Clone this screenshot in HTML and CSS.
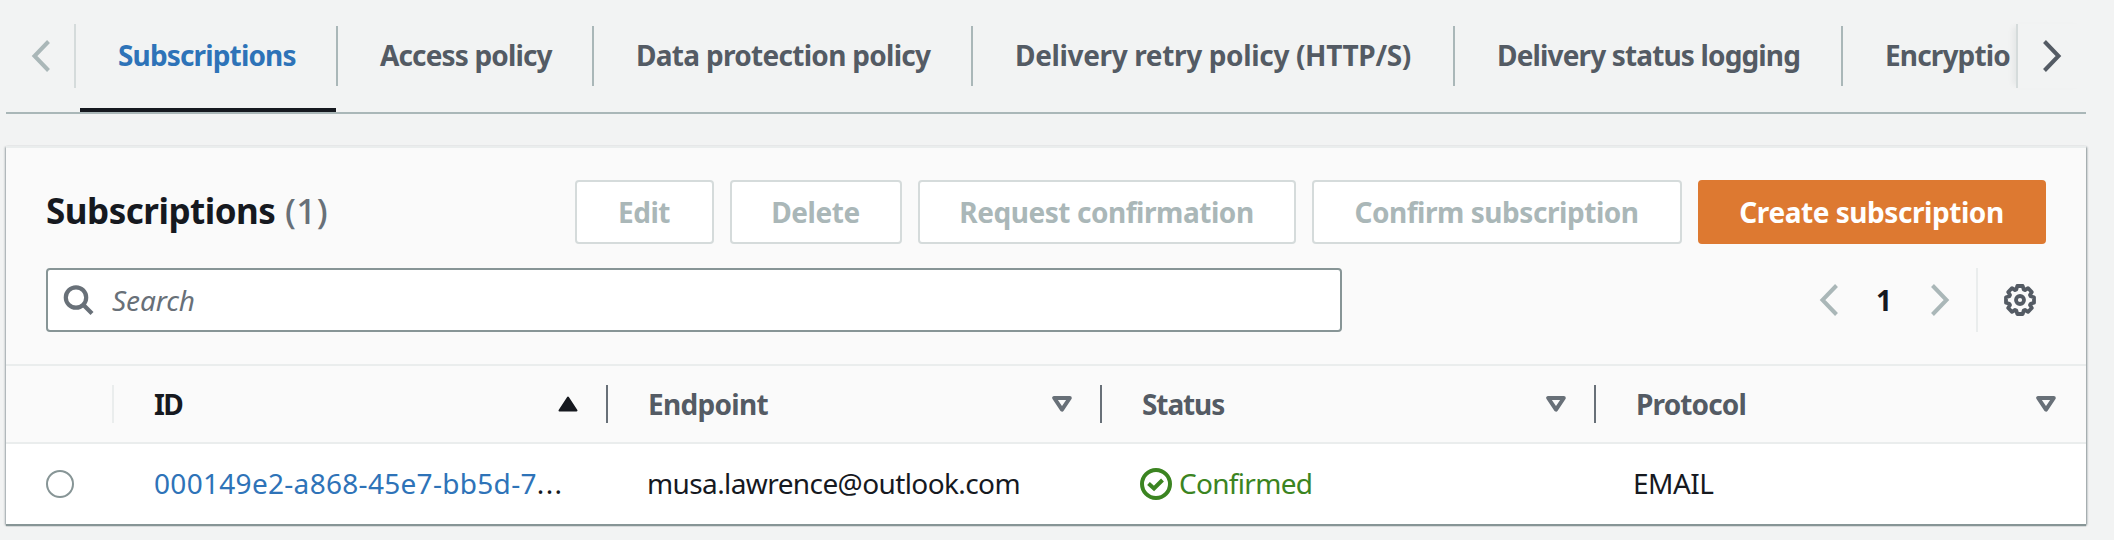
FILE: index.html
```html
<!DOCTYPE html>
<html lang="en">
<head>
<meta charset="utf-8">
<title>Subscriptions</title>
<link rel="stylesheet" href="styles.css">
</head>
<body>
<nav class="tabs">
  <button class="scroll scroll-left" aria-label="Scroll left"><svg width="20" height="32" viewBox="0 0 20 32"><path d="M17.500 1.500 3.500 16l14 14.500"/></svg></button>
  <div class="tab-list">
    <a class="tab active"><span class="t1">Subscriptions</span></a>
    <a class="tab"><span class="t2">Access policy</span></a>
    <a class="tab"><span class="t3">Data protection policy</span></a>
    <a class="tab"><span class="t4">Delivery retry policy (HTTP/S)</span></a>
    <a class="tab"><span class="t5">Delivery status logging</span></a>
    <a class="tab"><span class="t6">Encryptio</span></a>
  </div>
  <button class="scroll scroll-right" aria-label="Scroll right"><svg width="20" height="32" viewBox="0 0 20 32"><path d="M2.500 1.500l14 14.500-14 14.500"/></svg></button>
</nav>
<main class="card">
  <header class="head">
    <h1 class="title"><span class="title-name">Subscriptions</span> <span class="count">(1)</span></h1>
    <div class="actions">
      <button class="btn edit"><span>Edit</span></button>
      <button class="btn delete"><span>Delete</span></button>
      <button class="btn request"><span>Request confirmation</span></button>
      <button class="btn confirm"><span>Confirm subscription</span></button>
      <button class="btn primary"><span>Create subscription</span></button>
    </div>
  </header>
  <div class="tools">
    <label class="search">
      <svg width="32" height="32" viewBox="0 0 32 32"><circle cx="13" cy="13.500" r="10.200"/><path d="M20 20.500 29 29.500"/></svg>
      <span class="placeholder">Search</span>
    </label>
    <div class="pager">
      <svg class="chev" width="20" height="32" viewBox="0 0 20 32"><path d="M17.500 1.500 3.500 16l14 14.500"/></svg>
      <span class="page">1</span>
      <svg class="chev" width="20" height="32" viewBox="0 0 20 32"><path d="M2.500 1.500l14 14.500-14 14.500"/></svg>
      <span class="rule"></span>
      <svg class="gear" width="34" height="34" viewBox="-17 -17 34 34"><path d="M-2.700-14H2.700L3.700-10.600 5-10 8-11.800 11.800-8 10-5 10.600-3.700 14-2.700V2.700L10.600 3.700 10 5 11.800 8 8 11.800 5 10 3.700 10.600 2.700 14H-2.700L-3.700 10.600-5 10-8 11.800-11.800 8-10 5-10.600 3.700-14 2.700V-2.700L-10.600-3.700-10-5-11.800-8-8-11.800-5-10-3.700-10.600z"/><circle r="4"/></svg>
    </div>
  </div>
  <div class="grid header">
    <div class="cell"></div>
    <div class="cell sorted"><span class="h1">ID</span><svg width="20" height="16" viewBox="0 0 20 16"><path class="solid" d="M10 1.500 18.500 14.500h-17z"/></svg></div>
    <div class="cell"><span class="h2">Endpoint</span><svg width="20" height="16" viewBox="0 0 20 16"><path d="M2.200 2h15.600L10 13.700z"/></svg></div>
    <div class="cell"><span class="h3">Status</span><svg width="20" height="16" viewBox="0 0 20 16"><path d="M2.200 2h15.600L10 13.700z"/></svg></div>
    <div class="cell"><span class="h4">Protocol</span><svg width="20" height="16" viewBox="0 0 20 16"><path d="M2.200 2h15.600L10 13.700z"/></svg></div>
  </div>
  <div class="grid row">
    <div class="cell"><span class="radio"></span></div>
    <div class="cell"><a class="link">000149e2-a868-45e7-bb5d-7</a><span class="dots">...</span></div>
    <div class="cell"><span class="mail">musa.lawrence@outlook.com</span></div>
    <div class="cell status"><svg width="32" height="32" viewBox="0 0 32 32"><circle cx="16" cy="16" r="14"/><path d="M8.500 15.500l5.500 5 8.500-8.500"/></svg><span class="ok">Confirmed</span></div>
    <div class="cell proto"><span>EMAIL</span></div>
  </div>
</main>
</body>
</html>
```
FILE: styles.css
```css
* { box-sizing: border-box; }
body {
  margin: 0;
  height: 540px;
  padding: 0 28px 0 6px;
  overflow: hidden;
  background: #f2f3f3;
  color: #16191f;
  font: 28px/40px "Noto Sans", "Open Sans", sans-serif;
  white-space: nowrap;
}
button { border: 0; padding: 0; background: none; font: inherit; color: inherit; }
svg { display: block; flex: none; fill: none; }

/* Tabs */
.tabs { display: flex; height: 114px; border-bottom: 2px solid #aab7b8; }
.scroll { flex: none; height: 64px; margin-top: 24px; display: flex; align-items: center; stroke: #545b64; stroke-width: 4; }
.scroll-left { width: 70px; padding-left: 25px; border-right: 2px solid #d5dbdb; stroke: #aab7b8; }
.scroll-right { width: 70px; padding-left: 24px; border-left: 2px solid #d5dbdb; box-shadow: -6px 0 6px -3px rgba(0, 28, 36, .06); }
.tab-list { display: flex; flex: 1; min-width: 0; overflow: hidden; padding-left: 4px; }
.tab { flex: none; height: 112px; padding-top: 26px; color: #545b64; font-weight: 700; }
.tab span { display: block; height: 60px; line-height: 59px; padding-left: 42px; border-right: 2px solid #aab7b8; letter-spacing: -0.85px; }
.tab.active { color: #2e73b8; background: linear-gradient(#16191f, #16191f) 0 100% / 256px 4px no-repeat; }
.tab .t1 { width: 258px; padding-left: 38px; }
.tab .t2 { width: 256px; letter-spacing: -0.85px; }
.tab .t3 { width: 379px; letter-spacing: -0.7px; }
.tab .t4 { width: 482px; letter-spacing: -0.35px; }
.tab .t5 { width: 388px; }
.tab .t6 { width: 200px; }

/* Card */
.card { margin-top: 32px; height: 378px; background: #fafafa; border-top: 2px solid #eaeded; box-shadow: 0 2px 1px 0 #879596, 1px 1px 2px 0 rgba(0, 28, 36, .4), -1px 1px 2px 0 rgba(0, 28, 36, .3); }
.head { display: flex; justify-content: space-between; padding: 32px 40px 0; height: 120px; }
.title { margin: 0; font-size: 35px; line-height: 62px; font-weight: 700; letter-spacing: -0.5px; }
.count { margin-left: 1px; color: #687078; font-weight: 500; letter-spacing: 0.4px; }
.actions { display: flex; gap: 16px; }
.btn { height: 64px; padding: 0 1px 1px 0; border: 2px solid #d5dbdb; border-radius: 4px; background: #fff; color: #aab7b8; font-weight: 700; letter-spacing: -0.45px; line-height: 58px; }
.edit { width: 139px; }
.delete { width: 172px; }
.request { width: 378px; }
.confirm { width: 370px; }
.primary { width: 348px; background: #dd7931; border-color: #dd7931; color: #fff; }

.tools { display: flex; justify-content: space-between; height: 96px; padding: 0 40px; }
.search { display: flex; align-items: center; width: 1296px; height: 64px; padding-left: 15px; border: 2px solid #879596; border-radius: 4px; background: #fff; }
.search svg { stroke: #687078; stroke-width: 4.200; }
.placeholder { margin-left: 17px; color: #687078; font-style: italic; letter-spacing: -0.1px; }
.pager { display: flex; align-items: center; height: 64px; }
.chev { stroke: #aab7b8; stroke-width: 4; }
.page { width: 91px; padding-right: 1px; text-align: center; font-weight: 700; }
.rule { width: 2px; height: 64px; margin: 0 25px 0 26px; background: #eaeded; }
.gear { margin-right: 9px; stroke: #545b64; stroke-width: 3.800; stroke-linejoin: round; }

/* Table */
.grid { display: grid; grid-template-columns: 108px 494px 494px 494px 490px; align-items: center; }
.header { height: 80px; border-top: 2px solid #eaeded; border-bottom: 2px solid #eaeded; color: #545b64; font-weight: 700; letter-spacing: -0.7px; }
.header .cell { display: flex; justify-content: space-between; align-items: center; height: 38px; padding: 0 28px 0 40px; border-right: 2px solid #687078; }
.header .cell:first-child { border-color: #eaeded; }
.header .cell:last-child { border: 0; padding-right: 30px; }
.header svg { stroke: #687078; stroke-width: 4; stroke-linejoin: round; }
.header .sorted { color: #16191f; }
.header .h1 { letter-spacing: -1.7px; }
.header .h3 { letter-spacing: -1.1px; }
.header .h4 { letter-spacing: -0.85px; }
.header .solid { fill: #16191f; stroke: #16191f; stroke-width: 2; }
.row { height: 80px; background: #fff; }
.row .cell { display: flex; align-items: center; height: 80px; padding-left: 40px; }
.row .cell a, .row .cell span { margin-top: -2px; }
.row .cell .radio { width: 28px; height: 28px; margin-top: 0; border: 2px solid #879596; border-radius: 50%; }
.link { color: #2e73b8; letter-spacing: 0.3px; }
.dots { letter-spacing: 1.4px; }
.mail { margin-left: -1px; letter-spacing: -0.6px; }
.status { color: #3b8421; }
.status svg { stroke: #3b8421; stroke-width: 4; margin-left: -2px; margin-right: 7px; }
.ok { letter-spacing: -0.7px; }
.row .proto { padding-left: 37px; letter-spacing: -0.5px; }
```
